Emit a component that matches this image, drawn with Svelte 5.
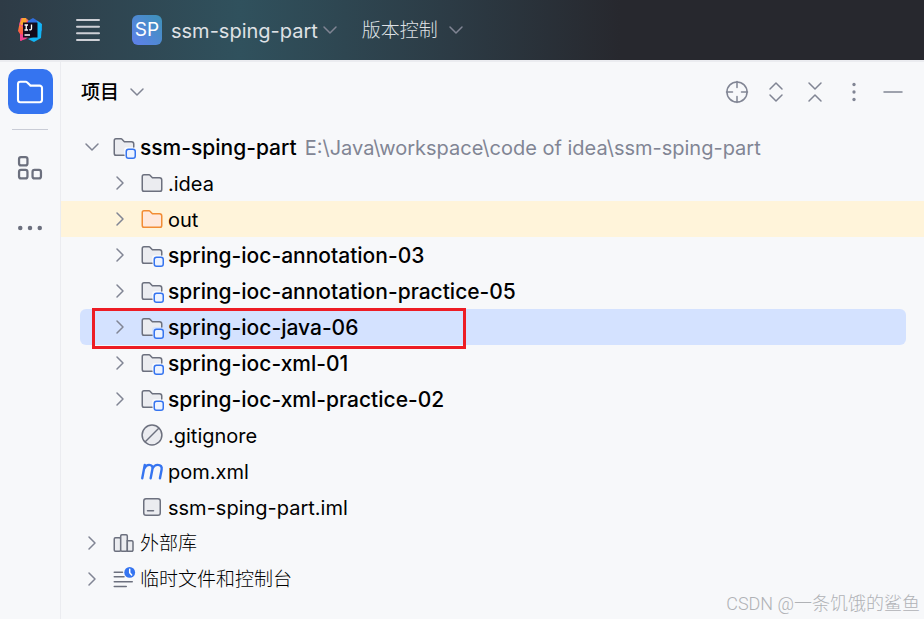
<script lang="ts">
    type Item = {
        name: string
        icon: string
        level: number
        open?: boolean
        leaf?: boolean
        bold?: boolean
        path?: string
        excluded?: boolean
        localized?: boolean
    }

    const items: Item[] = [
        {name: 'ssm-sping-part', icon: 'module', level: 0, open: true, bold: true, path: 'E:\\Java\\workspace\\code of idea\\ssm-sping-part'},
        {name: '.idea', icon: 'folder', level: 1},
        {name: 'out', icon: 'excluded', level: 1, excluded: true},
        {name: 'spring-ioc-annotation-03', icon: 'module', level: 1, bold: true},
        {name: 'spring-ioc-annotation-practice-05', icon: 'module', level: 1, bold: true},
        {name: 'spring-ioc-java-06', icon: 'module', level: 1, bold: true},
        {name: 'spring-ioc-xml-01', icon: 'module', level: 1, bold: true},
        {name: 'spring-ioc-xml-practice-02', icon: 'module', level: 1, bold: true},
        {name: '.gitignore', icon: 'ignored', level: 1, leaf: true},
        {name: 'pom.xml', icon: 'maven', level: 1, leaf: true},
        {name: 'ssm-sping-part.iml', icon: 'iml', level: 1, leaf: true},
        {name: '外部库', icon: 'library', level: 0, localized: true},
        {name: '临时文件和控制台', icon: 'scratches', level: 0, localized: true},
    ]

    const marked = 'spring-ioc-java-06'
    let selected = $state('spring-ioc-java-06')
</script>

{#snippet chevron(open: boolean)}
    <svg class="chevron" viewBox="0 0 16 16" width="24" height="24" aria-hidden="true">
        {#if open}
            <path d="M4 6l4 4 4-4" />
        {:else}
            <path d="M6 4l4 4-4 4" />
        {/if}
    </svg>
{/snippet}

{#snippet fileIcon(kind: string)}
    <svg class="file-icon" viewBox="0 0 16 16" width="24" height="24" aria-hidden="true">
        {#if kind === 'folder' || kind === 'excluded'}
            <path class:orange={kind === 'excluded'} d="M8.1 4.35l.15.15H13A1.5 1.5 0 0 1 14.5 6v6.1c0 .8-.55 1.4-1.15 1.4H2.65c-.6 0-1.15-.6-1.15-1.4V3.9c0-.8.55-1.4 1.15-1.4h3.5c.13 0 .25.05.35.15z" />
        {:else if kind === 'module'}
            <path class="plain" d="M8 13.5H2.65c-.6 0-1.15-.6-1.15-1.4V3.9c0-.8.55-1.4 1.15-1.4h3.5c.13 0 .25.05.35.15l1.75 1.85H13A1.5 1.5 0 0 1 14.5 6v2H10a2 2 0 0 0-2 2z" />
            <path class="line" d="M8 13.5H2.65c-.6 0-1.15-.6-1.15-1.4V3.9c0-.8.55-1.4 1.15-1.4h3.5c.13 0 .25.05.35.15l1.75 1.85H13A1.5 1.5 0 0 1 14.5 6v2" />
            <rect class="blue" x="9.5" y="9.5" width="6" height="6" rx="1.5" />
        {:else if kind === 'ignored'}
            <circle cx="8" cy="8" r="6.6" />
            <path d="M3.5 12.5l9-9" />
        {:else if kind === 'maven'}
            <path class="maven" d="M1.5 12.8L3.2 3.9M2.8 6.4C3.6 4.800 4.700 3.900 6.100 3.900c1.700 0 2.500 1.100 2.200 2.800l-1.200 6.100M8.200 6.600c.8-1.700 2-2.700 3.600-2.700 2 0 3 1.200 2.600 3.200l-1.100 5.700" />
        {:else if kind === 'iml'}
            <rect x="2.5" y="2.5" width="11" height="11" rx="1.5" />
            <path d="M5 10.5h4" />
        {:else if kind === 'library'}
            <rect x="1.5" y="4.5" width="4.3" height="9" rx="0.8" />
            <rect x="5.8" y="2.5" width="4.4" height="11" rx="0.8" />
            <path d="M10.2 6.5h3a.8.8 0 0 1 .8.8v5.400a.8.8 0 0 1-.8.8h-3z" />
        {:else}
            <path class="line" d="M1.5 3.500H7M1.5 6.500h6.500M1.5 9.800h12M1.5 13h8" />
            <circle class="clock" cx="11.800" cy="3.600" r="3.600" />
            <path class="hand" d="M11.800 1.500v2.300l1.300 1.500" />
        {/if}
    </svg>
{/snippet}

<div class="window">
    <header>
        <svg class="logo" viewBox="0 0 24 24" width="24" height="24" aria-hidden="true">
            <defs>
                <linearGradient id="warm" x1="0" y1="0" x2="0" y2="1">
                    <stop offset="0" stop-color="#fdb32a" />
                    <stop offset="0.5" stop-color="#fc6a3c" />
                    <stop offset="1" stop-color="#fe2b6d" />
                </linearGradient>
            </defs>
            <path fill="url(#warm)" d="M3 0l6 1 4 4-4 13-6 5-1-7-2-3 1-5z" />
            <path fill="#e83aa0" d="M3 0h5l3 5-6 4-4-2z" />
            <path fill="#fca52f" d="M4 0h4l1 4-6 4-1-3z" />
            <path fill="#2f6fe0" d="M10 3l5-3 8 5 1 7-5 7-9-1z" />
            <path fill="#12b5f5" d="M19 3l5 3-1 14-7 4-6-3 8-3z" />
            <path fill="#f0438f" d="M2 16l9 2-3 3-6 2z" />
            <path fill="#120b1c" d="M5 4.500h14.500V19.500H5z" />
            <path class="logo-mark" d="M6.500 7h3.500M8.250 7v5M6.500 12h3.500M13.500 6.500v4q0 1.700-2.300 1.200M6.500 17h5.500" />
        </svg>
        <button class="menu" aria-label="主菜单">
            <svg viewBox="0 0 24 24" width="24" height="24"><path d="M1 2h22M1 8.700h22M1 15.300h22M1 22h22" /></svg>
        </button>
        <button class="project">
            <span class="badge">SP</span>
            <span class="label">ssm-sping-part</span>
            {@render chevron(true)}
        </button>
        <button class="vcs">
            <span class="label">版本控制</span>
            {@render chevron(true)}
        </button>
    </header>

    <div class="body">
        <nav>
            <button class="active" aria-label="项目">
                <svg viewBox="0 0 20 20" width="30" height="30"><path d="M10.100 5.500l.2.250h6A1.600 1.600 0 0 1 18 7.300v7.900c0 .9-.6 1.600-1.500 1.600H3.500c-.9 0-1.500-.7-1.500-1.600V4.800c0-.9.6-1.600 1.500-1.600h3.800c.3 0 .5.1.7.3z" /></svg>
            </button>
            <hr>
            <button aria-label="结构">
                <svg viewBox="0 0 20 20" width="30" height="30">
                    <rect x="2.700" y="2.700" width="5.600" height="5.600" rx="1.300" />
                    <rect x="2.700" y="11.300" width="5.600" height="5.600" rx="1.300" />
                    <rect x="11.700" y="11.300" width="5.600" height="5.600" rx="1.300" />
                </svg>
            </button>
            <button class="more" aria-label="更多">
                <svg viewBox="0 0 20 20" width="30" height="30">
                    <circle cx="3.500" cy="10" r="1.500" />
                    <circle cx="10" cy="10" r="1.500" />
                    <circle cx="16.500" cy="10" r="1.500" />
                </svg>
            </button>
        </nav>

        <main>
            <div class="panel-header">
                <button class="title">
                    <span class="label">项目</span>
                    {@render chevron(true)}
                </button>
                <div class="tools">
                    <button aria-label="定位">
                        <svg viewBox="0 0 16 16" width="24" height="24"><path d="M8 1v4M8 11v4M1 8h4M11 8h4" /><circle cx="8" cy="8" r="6.700" /></svg>
                    </button>
                    <button aria-label="全部展开">
                        <svg viewBox="0 0 16 16" width="24" height="24"><path d="M4 6l4-4 4 4M4 10l4 4 4-4" /></svg>
                    </button>
                    <button aria-label="全部收起">
                        <svg viewBox="0 0 16 16" width="24" height="24"><path d="M4 2l4 4 4-4M4 14l4-4 4 4" /></svg>
                    </button>
                    <button class="dots" aria-label="选项">
                        <svg viewBox="0 0 16 16" width="24" height="24"><circle cx="8" cy="3" r="1.100" /><circle cx="8" cy="8" r="1.100" /><circle cx="8" cy="13" r="1.100" /></svg>
                    </button>
                    <button aria-label="隐藏">
                        <svg viewBox="0 0 16 16" width="24" height="24"><path d="M2 8h12" /></svg>
                    </button>
                </div>
            </div>

            <ul>
                {#each items as item}
                    <li class:excluded={item.excluded}>
                        <button class="row" class:child={item.level === 1} class:bold={item.bold} class:localized={item.localized}
                                class:selected={selected === item.name} onclick={() => selected = item.name}>
                            {#if item.leaf}
                                <span class="spacer"></span>
                            {:else}
                                {@render chevron(!!item.open)}
                            {/if}
                            {@render fileIcon(item.icon)}
                            <span class="label name">{item.name}</span>
                            {#if item.path}
                                <span class="label path">{item.path}</span>
                            {/if}
                        </button>
                        {#if item.name === marked}
                            <div class="mark"></div>
                        {/if}
                    </li>
                {/each}
            </ul>
        </main>
    </div>

    <div class="watermark">CSDN @一条饥饿的鲨鱼</div>
</div>

<style>
    :global(body) {
        background: #f7f8fa;
    }

    .window {
        position: relative;
        display: flex;
        flex-direction: column;
        min-height: 100vh;
        overflow: hidden;
        font-family: Inter, "Noto Sans CJK SC", sans-serif;
        font-size: 20px;
        line-height: 24px;
        color: #000;
    }

    button {
        display: flex;
        align-items: center;
        padding: 0;
        border: none;
        background: none;
        font: inherit;
        color: inherit;
        cursor: pointer;
    }

    svg {
        display: block;
        flex: none;
        fill: none;
    }

    .label {
        padding-top: 2px;
    }

    .chevron {
        stroke: #818594;
        stroke-linecap: round;
        stroke-linejoin: round;
    }

    header {
        display: flex;
        align-items: center;
        height: 60px;
        padding-left: 18px;
        background: linear-gradient(90deg, #2e3b46 0, #30515d 240px, #2c3b45 450px, #27282e 620px);
        color: #dfe1e5;
    }

    .logo-mark {
        stroke: #fff;
        stroke-width: 1.3;
    }

    .menu {
        margin: 0 32px 0 34px;
    }

    .menu svg {
        stroke: #ced0d6;
        stroke-width: 2;
        stroke-linecap: round;
    }

    .badge {
        width: 30px;
        margin-right: 9px;
        border-radius: 6px;
        background: linear-gradient(45deg, #6080ec, #3d92b8);
        font-size: 19px;
        line-height: 30px;
        text-align: center;
        color: #fff;
    }

    .project .chevron {
        margin-right: 20px;
    }

    .vcs {
        font-size: 19px;
        font-weight: 300;
    }

    .vcs .chevron {
        margin-left: 6px;
    }

    .body {
        display: flex;
        flex: 1;
        border-top: 2px solid #ebecf0;
    }

    nav {
        display: flex;
        flex-direction: column;
        align-items: center;
        width: 60px;
        padding-top: 7px;
        border-right: 1px solid #ebecf0;
    }

    nav button {
        justify-content: center;
        width: 45px;
        height: 45px;
        border-radius: 10px;
    }

    nav svg {
        stroke: #6c707e;
        stroke-width: 1.5;
    }

    nav .active {
        background: #3574f0;
    }

    .active svg {
        stroke: #fff;
        stroke-width: 1.4;
    }

    nav hr {
        width: 36px;
        height: 1px;
        margin: 15px 0;
        border: none;
        background: #c9ccd6;
    }

    .more {
        margin-top: 15px;
    }

    .more svg {
        fill: #6c707e;
        stroke: none;
    }

    main {
        flex: 1;
        min-width: 0;
    }

    .panel-header {
        display: flex;
        align-items: center;
        justify-content: space-between;
        height: 60px;
        margin-bottom: 7px;
        padding: 0 19px 0 20px;
    }

    .title {
        gap: 6px;
        font-size: 19px;
        font-weight: 500;
    }

    .tools {
        display: flex;
        gap: 15px;
    }

    .tools svg {
        stroke: #818594;
        stroke-linecap: round;
        stroke-linejoin: round;
    }

    .tools .dots svg {
        fill: #818594;
        stroke: none;
    }

    ul {
        margin: 0;
        padding: 0;
        list-style: none;
    }

    li {
        position: relative;
        padding: 0 18px 0 19px;
    }

    li.excluded {
        background: #fff4da;
    }

    .row {
        width: 100%;
        height: 36px;
        border-radius: 6px;
        white-space: nowrap;
    }

    .row.child {
        padding-left: 28px;
    }

    .row.selected {
        background: #d4e2ff;
    }

    .row.bold .name {
        font-size: 21px;
        font-weight: 500;
    }

    .row.localized {
        font-size: 19px;
        font-weight: 300;
    }

    .spacer {
        width: 24px;
    }

    .file-icon {
        margin: 0 4px 0 8px;
        fill: #ebecf0;
        stroke: #6c707e;
        stroke-linecap: round;
    }

    .orange {
        fill: #ffe8dc;
        stroke: #f28c35;
    }

    .plain {
        stroke: none;
    }

    .line {
        fill: none;
    }

    .blue {
        fill: #edf3ff;
        stroke: #3574f0;
    }

    .maven {
        fill: none;
        stroke: #3574f0;
        stroke-width: 1.6;
    }

    .clock {
        fill: #3574f0;
        stroke: none;
    }

    .hand {
        fill: none;
        stroke: #fff;
    }

    .path {
        margin-left: 8px;
        color: #818594;
    }

    .mark {
        position: absolute;
        top: -1px;
        left: 31px;
        box-sizing: border-box;
        width: 374px;
        height: 41px;
        border: 3px solid #ed1c24;
        pointer-events: none;
    }

    .watermark {
        position: absolute;
        right: 4px;
        bottom: 3px;
        font-family: Roboto, "Noto Sans CJK SC", sans-serif;
        font-size: 18px;
        font-weight: 300;
        color: #b0b2b6;
    }
</style>
